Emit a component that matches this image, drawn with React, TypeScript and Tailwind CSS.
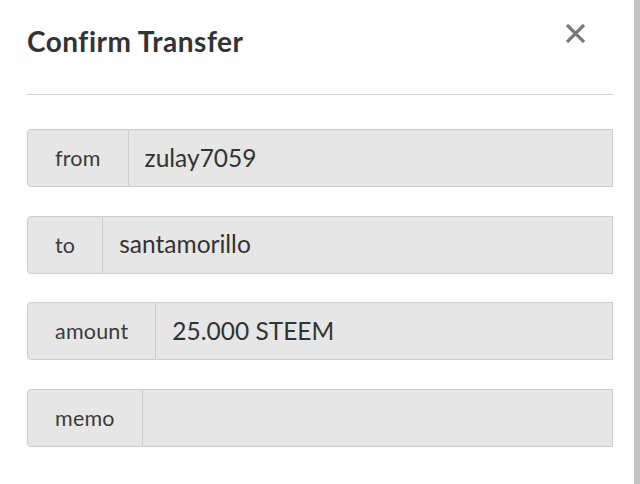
const rows = [
  { label: "from", value: "zulay7059" },
  { label: "to", value: "santamorillo" },
  { label: "amount", value: "25.000 STEEM" },
  { label: "memo", value: "" },
];

export default function App() {
  return (
    <div
      className="w-[640px] h-[484px] bg-[#fefefe] flex overflow-hidden"
      style={{ fontFamily: "Lato, 'Open Sans', sans-serif" }}
    >
      <div className="flex-1 pl-[27px] pr-[21px]">
        {/* header */}
        <div className="flex justify-between pt-[23px] pb-[35px] border-b border-[#d4d4d4]">
          <h1 className="text-[28px] leading-[36px] font-bold tracking-[0.5px] text-[#333333]">
            Confirm Transfer
          </h1>
          <button className="mt-[1px] mr-[28px] w-[19px] h-[19px] text-[#777777]" aria-label="close">
            <svg viewBox="0 0 19 19" className="w-[19px] h-[19px]">
              <path d="M1 1 L18 18 M18 1 L1 18" stroke="currentColor" strokeWidth="3.2" />
            </svg>
          </button>
        </div>

        {/* fields */}
        <div className="flex flex-col gap-[28.67px] pt-[34px]">
          {rows.map((r) => (
            <div key={r.label} className="flex h-[58px]">
              <div className="flex items-center px-[27px] bg-[#e6e6e6] border border-[#cdcdcd] rounded-l-[4px] text-[21.5px] tracking-[0.2px] text-[#3a3a3a]">
                {r.label}
              </div>
              <div className="flex-1 flex items-center pl-4 bg-[#e6e6e6] border-y border-r border-[#cdcdcd] text-[24.5px] text-[#333333]">
                {r.value}
              </div>
            </div>
          ))}
        </div>
      </div>
      <div className="w-[6px] h-full bg-[#c4c4c4]" />
    </div>
  );
}
